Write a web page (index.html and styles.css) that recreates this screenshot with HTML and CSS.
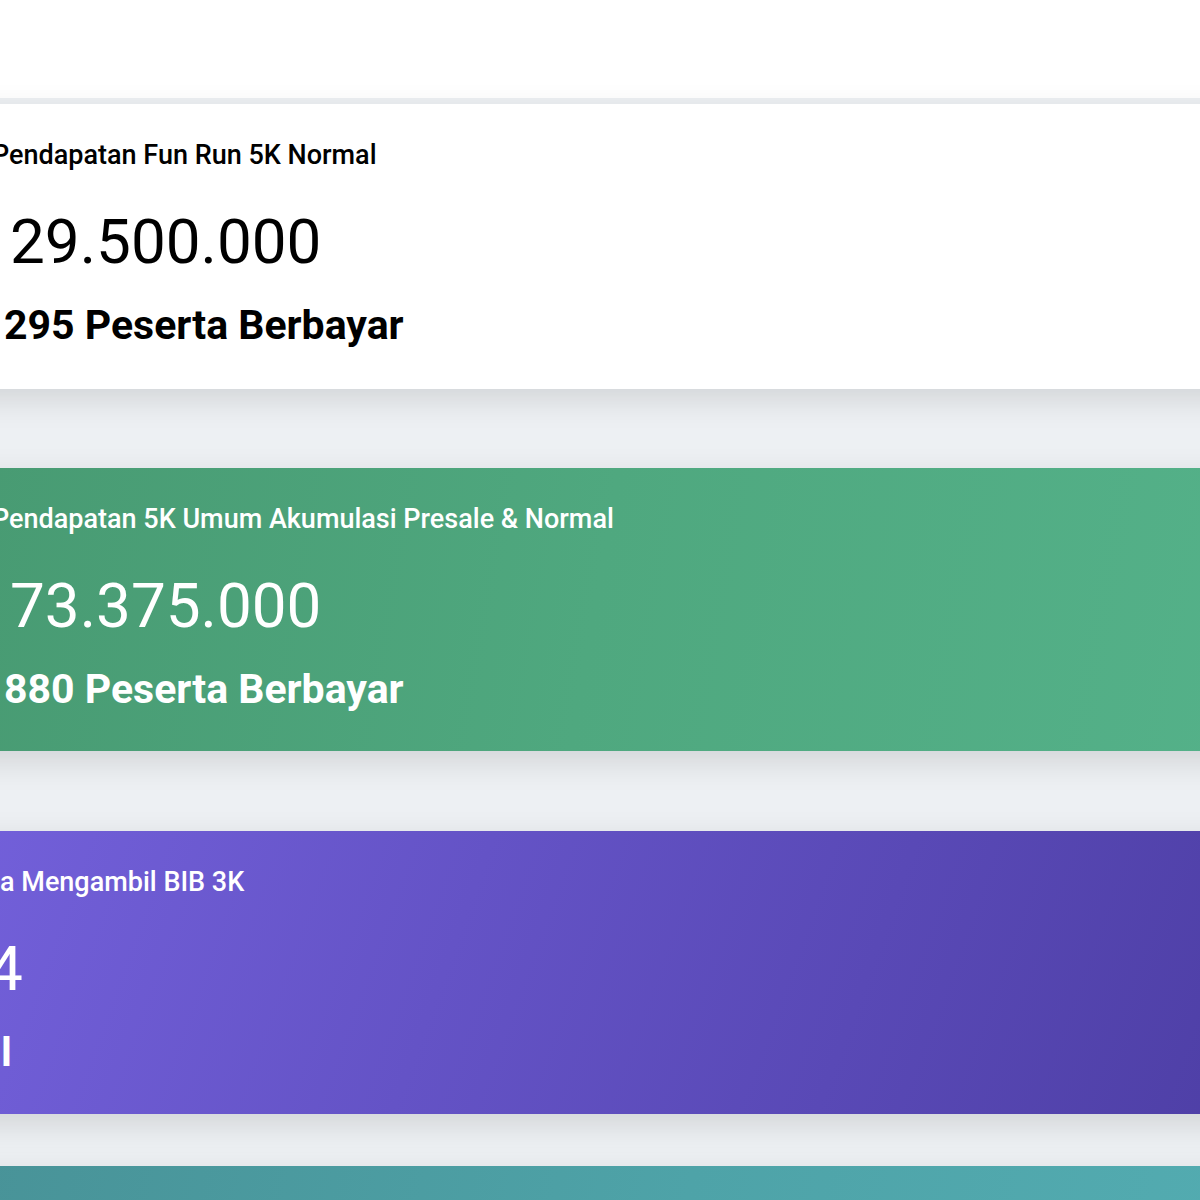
FILE: index.html
```html
<!DOCTYPE html>
<html lang="id">
<head>
<meta charset="utf-8">
<title>Dashboard Pendapatan</title>
<link rel="stylesheet" href="styles.css">
</head>
<body>
<header class="topbar"></header>
<main class="board">
  <section class="card card-white">
    <div class="line card-title"><span class="lead lead-title">Total </span><span>Pendapatan Fun Run 5K Normal</span></div>
    <div class="line card-value"><span class="lead lead-value">Rp </span><span>29.500.000</span></div>
    <div class="line card-sub"><span class="lead lead-sub">Dari </span><span>295 Peserta Berbayar</span></div>
  </section>
  <section class="card card-green">
    <div class="line card-title"><span class="lead lead-title">Total </span><span>Pendapatan 5K Umum Akumulasi Presale &amp; Normal</span></div>
    <div class="line card-value"><span class="lead lead-value">Rp </span><span>73.375.000</span></div>
    <div class="line card-sub"><span class="lead lead-sub">Dari </span><span>880 Peserta Berbayar</span></div>
  </section>
  <section class="card card-purple">
    <div class="line card-title"><span class="lead lead-title-p">Jumlah Pesert</span><span>a Mengambil BIB 3K</span></div>
    <div class="line card-value"><span class="lead lead-value-p">15</span><span>4</span></div>
    <div class="line card-sub"><span class="lead lead-sub-p">Tota</span><span>l</span></div>
  </section>
  <section class="card card-teal">
    <div class="line card-title"><span class="lead lead-title">Jumlah </span><span>Peserta Mengambil BIB 5K</span></div>
  </section>
</main>
</body>
</html>
```
FILE: styles.css
```css
html, body {
  margin: 0;
  padding: 0;
}
body {
  background: #edf0f3;
  font-family: Roboto, "Liberation Sans", Arial, sans-serif;
  overflow: hidden;
}
.topbar {
  height: 98px;
  background: #ffffff;
}
.board {
  padding-top: 6px;
  margin-left: -200px;
  margin-right: -40px;
  display: flex;
  flex-direction: column;
}
.card {
  padding: 36px 0 42px 0;
  height: 285px;
  box-sizing: border-box;
  margin-bottom: 79px;
  box-shadow: 0 10px 30px rgba(0, 0, 0, 0.12);
  white-space: nowrap;
}
.line {
  display: flex;
  align-items: baseline;
}
.lead {
  flex: 0 0 auto;
  text-align: right;
  white-space: pre;
  overflow: hidden;
}
.lead-title { width: 192px; }
.lead-value { width: 210px; }
.lead-sub { width: 204px; }
.lead-title-p { width: 200px; }
.lead-value-p { width: 188px; }
.lead-sub-p { width: 201px; }

.card-title {
  font-size: 27px;
  line-height: 30px;
  font-weight: 500;
}
.card-value {
  font-size: 62px;
  line-height: 76px;
  font-weight: 400;
  margin-top: 34px;
}
.card-sub {
  font-size: 41px;
  line-height: 44px;
  font-weight: 700;
  margin-top: 23px;
}
.card-white {
  background: #ffffff;
  color: #000000;
}
.card-green {
  background: linear-gradient(100deg, #46976f 0%, #4fa87f 55%, #54b189 100%);
  color: #ffffff;
  height: 283px;
  margin-bottom: 80px;
}
.card-purple {
  background: linear-gradient(110deg, #7764e0 0%, #6453c6 45%, #4e3fa6 100%);
  color: #ffffff;
  height: 283px;
  margin-bottom: 52px;
}
.card-teal {
  background: linear-gradient(100deg, #478f94 0%, #4ea3a8 60%, #53acb1 100%);
  color: #ffffff;
}
```
